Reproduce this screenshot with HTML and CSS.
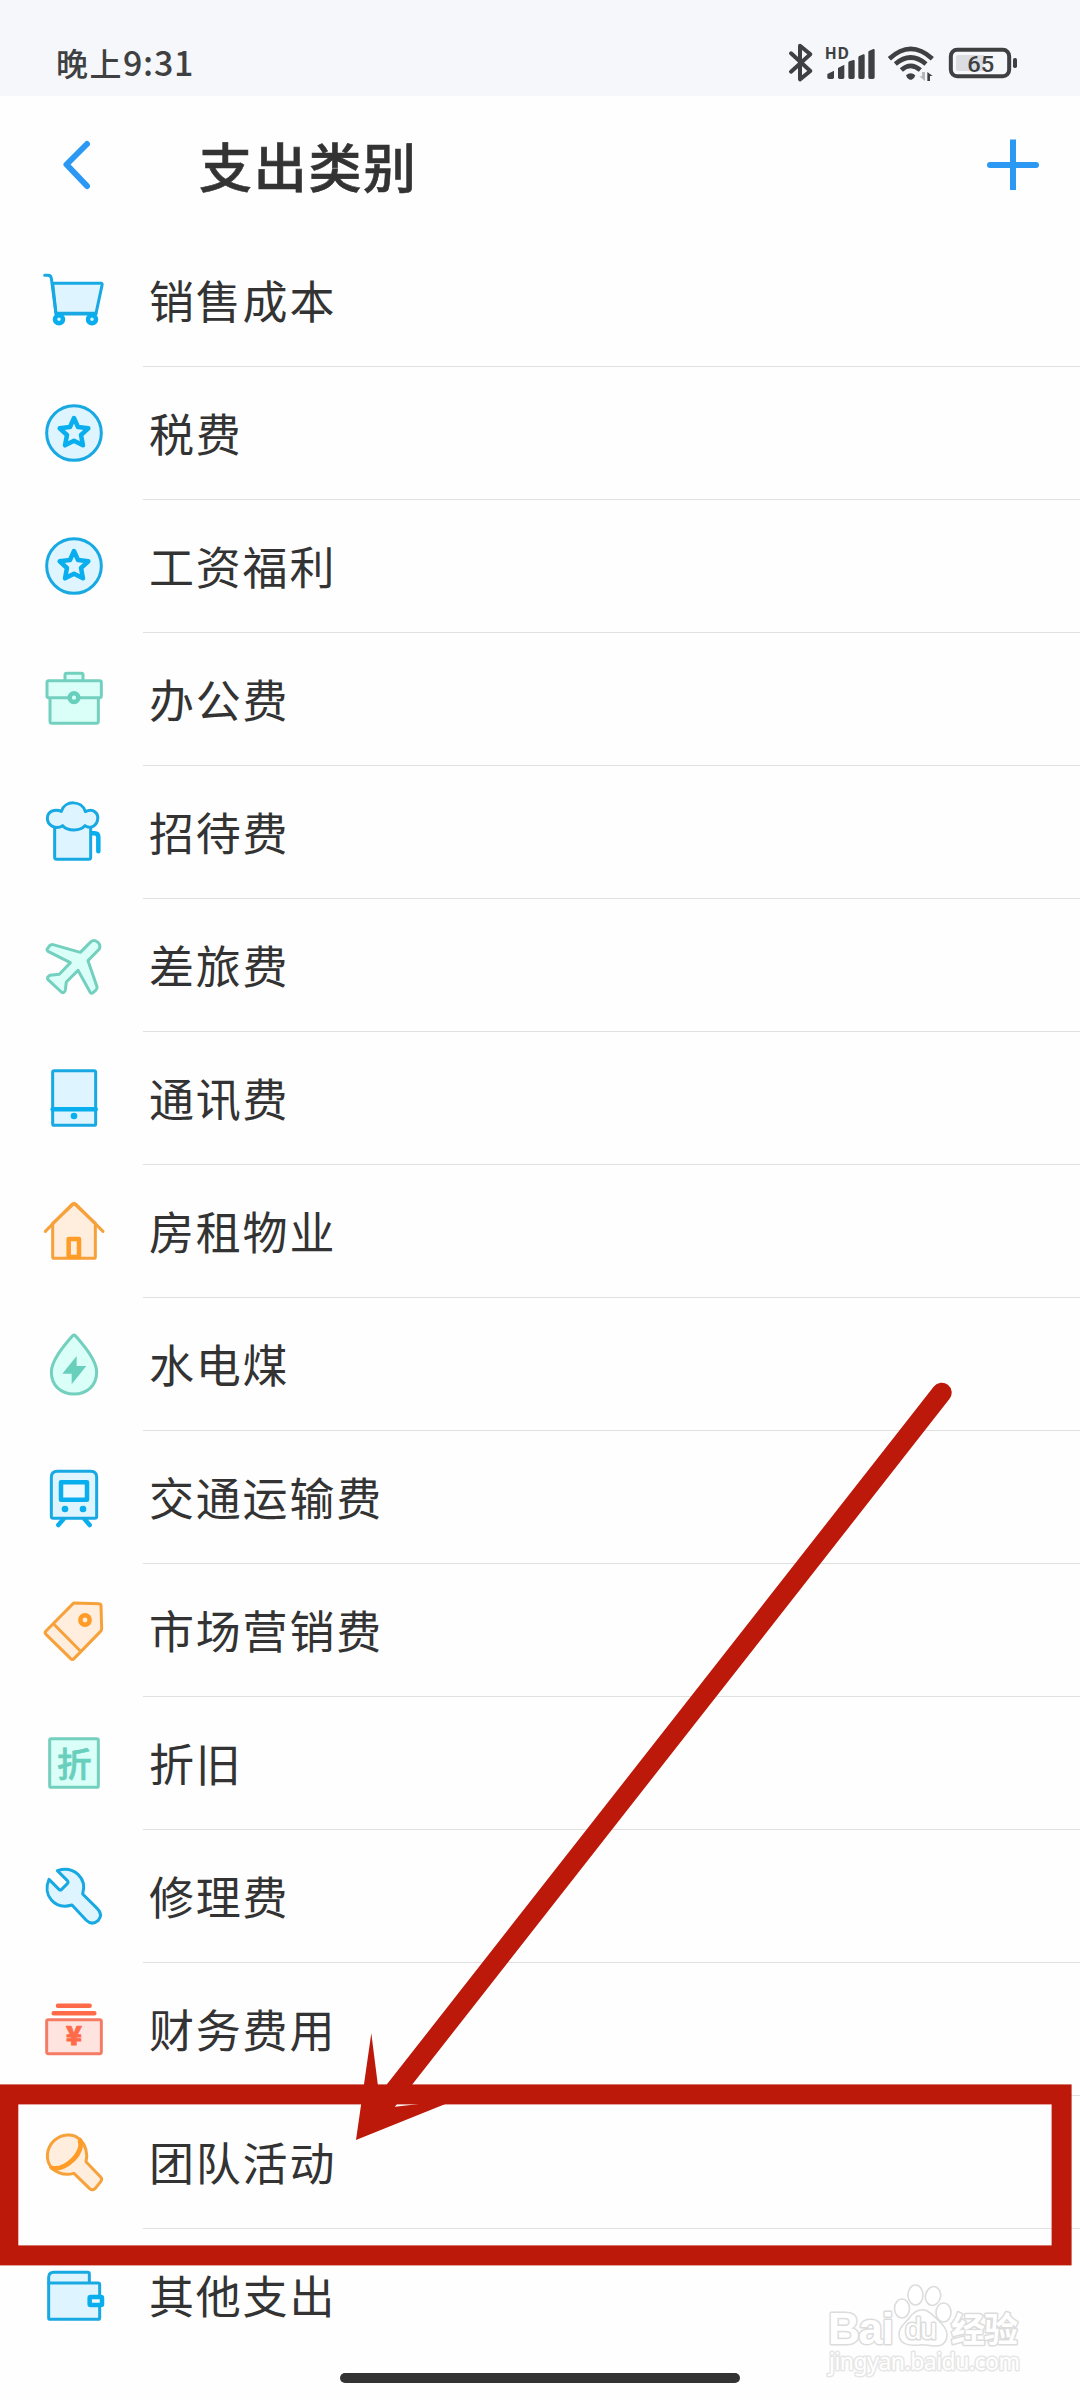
FILE: index.html
```html
<!DOCTYPE html>
<html lang="zh-CN">
<head>
<meta charset="utf-8">
<title>支出类别</title>
<link rel="stylesheet" href="styles.css">
</head>
<body>
<div class="screen">
  <div class="status">
    <div class="time"><span class="period">晚上</span><span class="clock">9:31</span></div>
    <svg class="status-icons" viewBox="135 0 720 288">
      <path class="bt" d="M153 160L211 213L180 238V137L211 163L153 215"/>
      <text class="hd" x="254" y="176" textLength="73">HD</text>
      <g class="solid">
        <path d="M262 222L282 212V232Q282 237 277 237H267Q262 237 262 232Z"/>
        <path d="M294 204L313 194V232Q313 237 308 237H299Q294 237 294 232Z"/>
        <path d="M325 188Q325 185 328 184L340 180Q344 179 344 183V232Q344 237 339 237H330Q325 237 325 232Z"/>
        <path d="M355 172Q355 169 358 168L370 163Q374 162 374 166V232Q374 237 369 237H360Q355 237 355 232Z"/>
        <path d="M385 156Q385 153 388 152L400 147Q404 146 404 150V232Q404 237 399 237H390Q385 237 385 232Z"/>
        <path d="M498 226Q512 214 526 226Q524 234 517 238Q512 241 507 238Q500 234 498 226Z"/>
        <path d="M562 243V216L578 228H570V243Z"/>
        <rect x="819" y="174" width="12" height="30" rx="5"/>
      </g>
      <path class="wifi" d="M448 176Q512 117 577 176M466 192Q512 153 558 192M484 210Q512 185 541 210"/>
      <path fill="#b5b6b9" d="M538 229H546V216H555V243Z"/>
      <path fill="#dcdde1" d="M656 165H731V213H656Q648 213 648 205V173Q648 165 656 165Z"/>
      <rect x="632.500" y="149.500" width="175" height="79" rx="19" fill="none" stroke="#3e4042" stroke-width="12"/>
      <text class="level" x="682" y="215" textLength="81" lengthAdjust="spacingAndGlyphs">65</text>
    </svg>
  </div>
  <header class="bar">
    <svg class="back" width="32" height="54" viewBox="0 0 32 54"><path d="M27 6L6.500 26.500L27 48"/></svg>
    <h1>支出类别</h1>
    <svg class="plus" width="52" height="52" viewBox="0 0 52 52"><path stroke-linecap="round" d="M3 26H49"/><path d="M26 .5V51"/></svg>
  </header>
  <ul class="list">
    <li><svg class="ic blue" viewBox="123 81 198 198"><path d="M158 130H303Q308 130 306 136L288 220H168Z"/><path class="line" d="M134 106H144Q153 106 154 115L168 222H288"/><circle class="ring" cx="177" cy="238" r="12"/><circle class="ring" cx="276" cy="238" r="12"/></svg><span>销售成本</span></li>
    <li><svg class="ic blue" viewBox="123 480 198 198"><circle cx="222" cy="579" r="82"/><path class="bold" d="M222 534L234 561L265 565L243 585L249 616L222 602L195 616L201 585L179 565L210 561Z"/></svg><span>税费</span></li>
    <li><svg class="ic blue" viewBox="123 480 198 198"><circle cx="222" cy="579" r="82"/><path class="bold" d="M222 534L234 561L265 565L243 585L249 616L222 602L195 616L201 585L179 565L210 561Z"/></svg><span>工资福利</span></li>
    <li><svg class="ic green" viewBox="123 78 198 198"><rect x="195" y="100" width="54" height="26" rx="5"/><path d="M150 172H295V244Q295 250 289 250H156Q150 250 150 244Z"/><rect x="141" y="122" width="163" height="51" rx="5"/><circle class="bold" cx="222" cy="173" r="13"/></svg><span>办公费</span></li>
    <li><svg class="ic blue" viewBox="123 477 198 198"><path class="bold line" d="M273 580H284Q295 580 295 592V634"/><path d="M164 548H272V652Q272 658 266 658H170Q164 658 164 652Z"/><path d="M184 514C194 480 246 480 256 515C279 503 299 520 292 543C286 562 267 566 255 557C242 573 204 575 188 557C168 570 142 557 142 535C142 515 164 505 184 514Z"/></svg><span>招待费</span></li>
    <li><svg class="ic green" viewBox="123 876 198 198"><path d="M141 928L149 917Q153 913 159 914L241 937L273 905Q280 899 288 903Q304 912 298 927L264 962L291 1040Q292 1047 287 1051L279 1058Q273 1062 270 1056L234 991L199 1026L196 1050Q193 1062 184 1056L144 1019Q139 1012 150 1006L178 1003L211 968L144 934Q140 931 141 928Z"/></svg><span>差旅费</span></li>
    <li><svg class="ic blue" viewBox="123 75 198 198"><rect x="158" y="92" width="129" height="164" rx="5"/><path class="bold" d="M158 208H287"/><circle class="dot" cx="222" cy="228" r="10"/></svg><span>通讯费</span></li>
    <li><svg class="ic orange" viewBox="123 474 198 198"><path d="M158 550L222 490L286 550V650Q286 655 281 655H163Q158 655 158 650Z"/><path class="line" d="M136 574L216 493Q222 488 228 493L309 574"/><rect class="bold" x="206" y="597" width="31" height="54"/></svg><span>房租物业</span></li>
    <li><svg class="ic green" viewBox="123 873 198 198"><path d="M217 888Q222 883 227 888C249 914 290 960 290 996C290 1037 261 1062 222 1062C183 1062 154 1037 154 996C154 960 195 914 217 888Z"/><path class="dot" d="M230 948V978H259L215 1033V1001H187Z"/></svg><span>水电煤</span></li>
    <li><svg class="ic blue" viewBox="123 72 198 198"><path class="bold line" d="M190 238L175 255M254 238L269 255"/><path d="M172 94H272Q290 94 290 112V229Q290 235 284 235H160Q154 235 154 229V112Q154 94 172 94Z"/><rect class="bold white" x="183" y="127" width="78" height="52"/><circle class="dot" cx="195" cy="207" r="10"/><circle class="dot" cx="249" cy="207" r="10"/></svg><span>交通运输费</span></li>
    <li><svg class="ic orange" viewBox="123 471 198 198"><path d="M222 489L297 491Q303 491 303 497L305 566Q305 571 301 575L222 656Q217 661 212 656L138 583Q133 578 138 573L217 493Q219 490 222 489Z"/><path d="M161 552L241 633"/><circle class="bold" cx="255" cy="540" r="14"/></svg><span>市场营销费</span></li>
    <li><svg class="ic green" viewBox="123 870 198 198"><rect x="149" y="896" width="146" height="146" rx="5"/><text class="glyph" x="171" y="1011">折</text></svg><span>折旧</span></li>
    <li><svg class="ic blue" viewBox="123 69 198 198"><path d="M172 92C222 76 262 115 248 162L292 206Q310 224 294 242Q276 258 258 240L216 195C164 211 126 165 147 118L177 148Q181 152 185 148L202 131Q206 127 202 122Z"/></svg><span>修理费</span></li>
    <li><svg class="ic red" viewBox="123 468 198 198"><path class="bold line" d="M174 497H269M161 520H283"/><rect x="140" y="539" width="164" height="102" rx="5"/><text class="glyph yen" x="222" y="614" text-anchor="middle">¥</text></svg><span>财务费用</span></li>
    <li><svg class="ic orange" viewBox="123 267 198 198"><path d="M240 297Q267 328 258 365L302 411Q308 417 302 425L286 445Q277 453 269 446L222 400Q185 411 152 382"/><path d="M240 299C221 278 184 281 162 302C137 327 137 360 154 383C176 394 204 377 222 360C241 341 250 316 240 299Z"/><path class="bold line" d="M240 304C247 322 231 348 216 361C199 377 178 388 157 384"/></svg><span>团队活动</span></li>
    <li><svg class="ic blue" viewBox="123 666 198 198"><path d="M146 728V712Q146 697 161 697H263Q268 697 268 702V728"/><path d="M146 729H294Q299 729 299 734V833Q299 838 294 838H151Q146 838 146 833Z"/><rect class="bold white" x="269" y="771" width="37" height="24" rx="3"/></svg><span>其他支出</span></li>
  </ul>
  <div class="home"></div>
  <svg class="overlay" width="1080" height="2400" viewBox="0 0 1080 2400">
    <rect x="8.300" y="2094.400" width="1053.300" height="161" fill="none" stroke="#bd190a" stroke-width="20"/>
    <path d="M941.700 1392.700L385 2103" stroke="#bd190a" stroke-width="20" stroke-linecap="round"/>
    <path fill="#bd190a" d="M356 2140L371.300 2033.300L379 2094L395 2106.700L455.900 2099.700Z"/>
    <g class="mark">
      <text class="brand" x="828" y="2344" textLength="66">Bai</text>
      <path d="M921 2310C927 2308 935 2317 942 2324C951 2334 947 2346 936 2346C927 2346 927 2344 919 2345C908 2346 899 2344 899 2334C899 2326 906 2323 910 2317C914 2312 917 2310 921 2310Z"/>
      <ellipse cx="902" cy="2308.500" rx="7.500" ry="9.500"/><ellipse cx="915.500" cy="2295" rx="7.500" ry="10"/><ellipse cx="933" cy="2296" rx="7.500" ry="9.500" transform="rotate(12 933 2296)"/><ellipse cx="943.500" cy="2312.500" rx="7.500" ry="9.500"/>
      <text class="du" x="905" y="2339" textLength="32">du</text>
      <text class="cn" x="951" y="2342" textLength="67">经验</text>
      <text class="site" x="829" y="2370" textLength="191">jingyan.baidu.com</text>
    </g>
  </svg>
</div>
</body>
</html>
```
FILE: styles.css
```css
* { box-sizing: border-box; }
body {
  margin: 0;
  background: #fefefe;
  color: #333;
  font-family: "Noto Sans CJK SC", sans-serif;
}
.screen {
  position: relative;
  width: 1080px;
  height: 2400px;
  overflow: hidden;
  display: flex;
  flex-direction: column;
}
.status {
  height: 96px;
  background: #f5f7fb;
  display: flex;
  justify-content: space-between;
  padding: 0 55px 0 56px;
  flex: none;
}
.time {
  display: flex;
  align-items: center;
  padding-top: 27px;
  color: #3e4042;
  font-weight: 500;
  font-size: 32px;
  line-height: 64px;
}
.period { letter-spacing: 1.5px; }
.clock { font-size: 34px; letter-spacing: 0.7px; }
.status-icons { width: 240px; height: 96px; }
.bt { fill: none; stroke: #3e4042; stroke-width: 12; stroke-linecap: round; stroke-linejoin: round; }
.solid, .hd, .level { fill: #3e4042; }
.hd { font: 700 47px "Noto Sans", sans-serif; }
.level { font: 500 68px Roboto, sans-serif; }
.wifi { fill: none; stroke: #3e4042; stroke-width: 14; }
.bar {
  height: 138px;
  flex: none;
  display: flex;
  align-items: center;
  padding: 0 41px 1px 60px;
}
.back { fill: none; stroke: #2b99f3; stroke-width: 6; stroke-linecap: round; stroke-linejoin: round; }
.plus { stroke: #2b99f3; stroke-width: 6; }
h1 {
  flex: 1;
  margin: 0 0 0 107px;
  font-size: 53px;
  font-weight: 500;
  letter-spacing: 1.7px;
  line-height: 70px;
  -webkit-text-stroke: 0.6px #333;
}
.list { list-style: none; margin: 0; padding: 0; }
.list li {
  height: 133px;
  display: flex;
  align-items: flex-start;
  padding-left: 41px;
}
.ic { width: 66px; height: 66px; flex: none; margin: 33px 36px 0 0; }
.list span {
  flex: 1;
  height: 133px;
  padding-left: 6px;
  border-bottom: 1px solid #e0e0e0;
  font-size: 45px;
  letter-spacing: 1.8px;
  line-height: 132px;
}
.list li:last-child span { border-bottom: 0; }
.ic { fill: var(--tint); stroke: var(--ink); stroke-width: 9; stroke-linecap: round; stroke-linejoin: round; }
.blue { --ink: #18a9e3; --strong: #08aeed; --tint: #def5ff; }
.green { --ink: #74d0be; --strong: #69cfbd; --tint: #dafff8; }
.orange { --ink: #f6a13a; --strong: #ff9c28; --tint: #ffeedd; }
.red { --ink: #f57c64; --strong: #ff6b49; --tint: #ffe3df; }
.bold, .ring { stroke: var(--strong); stroke-width: 13.5; }
.line { fill: none; }
.white { fill: #eef9ff; }
.dot { fill: var(--strong); stroke: none; }
.glyph { fill: var(--strong); stroke: var(--strong); stroke-width: 2; font-size: 104px; font-weight: 500; }
.yen { font-size: 78px; font-weight: 900; stroke-width: 3; }
.home {
  width: 400px;
  height: 10px;
  margin: 11px 0 0 340px;
  border-radius: 5px;
  background: #333;
}
.overlay { position: absolute; left: 0; top: 0; }
.mark { fill: #fff; stroke: #dcdcdc; stroke-width: 1.600; stroke-linejoin: round; }
.mark text { paint-order: stroke; stroke-width: 3; }
.brand { font: 700 44px "Liberation Sans", sans-serif; }
.du { font: 400 30px "Liberation Sans", sans-serif; }
.cn { font: 700 34px "Noto Sans CJK SC", sans-serif; }
.mark .site { font: 400 23px "Noto Sans", sans-serif; stroke: #e6e6e6; }
```
